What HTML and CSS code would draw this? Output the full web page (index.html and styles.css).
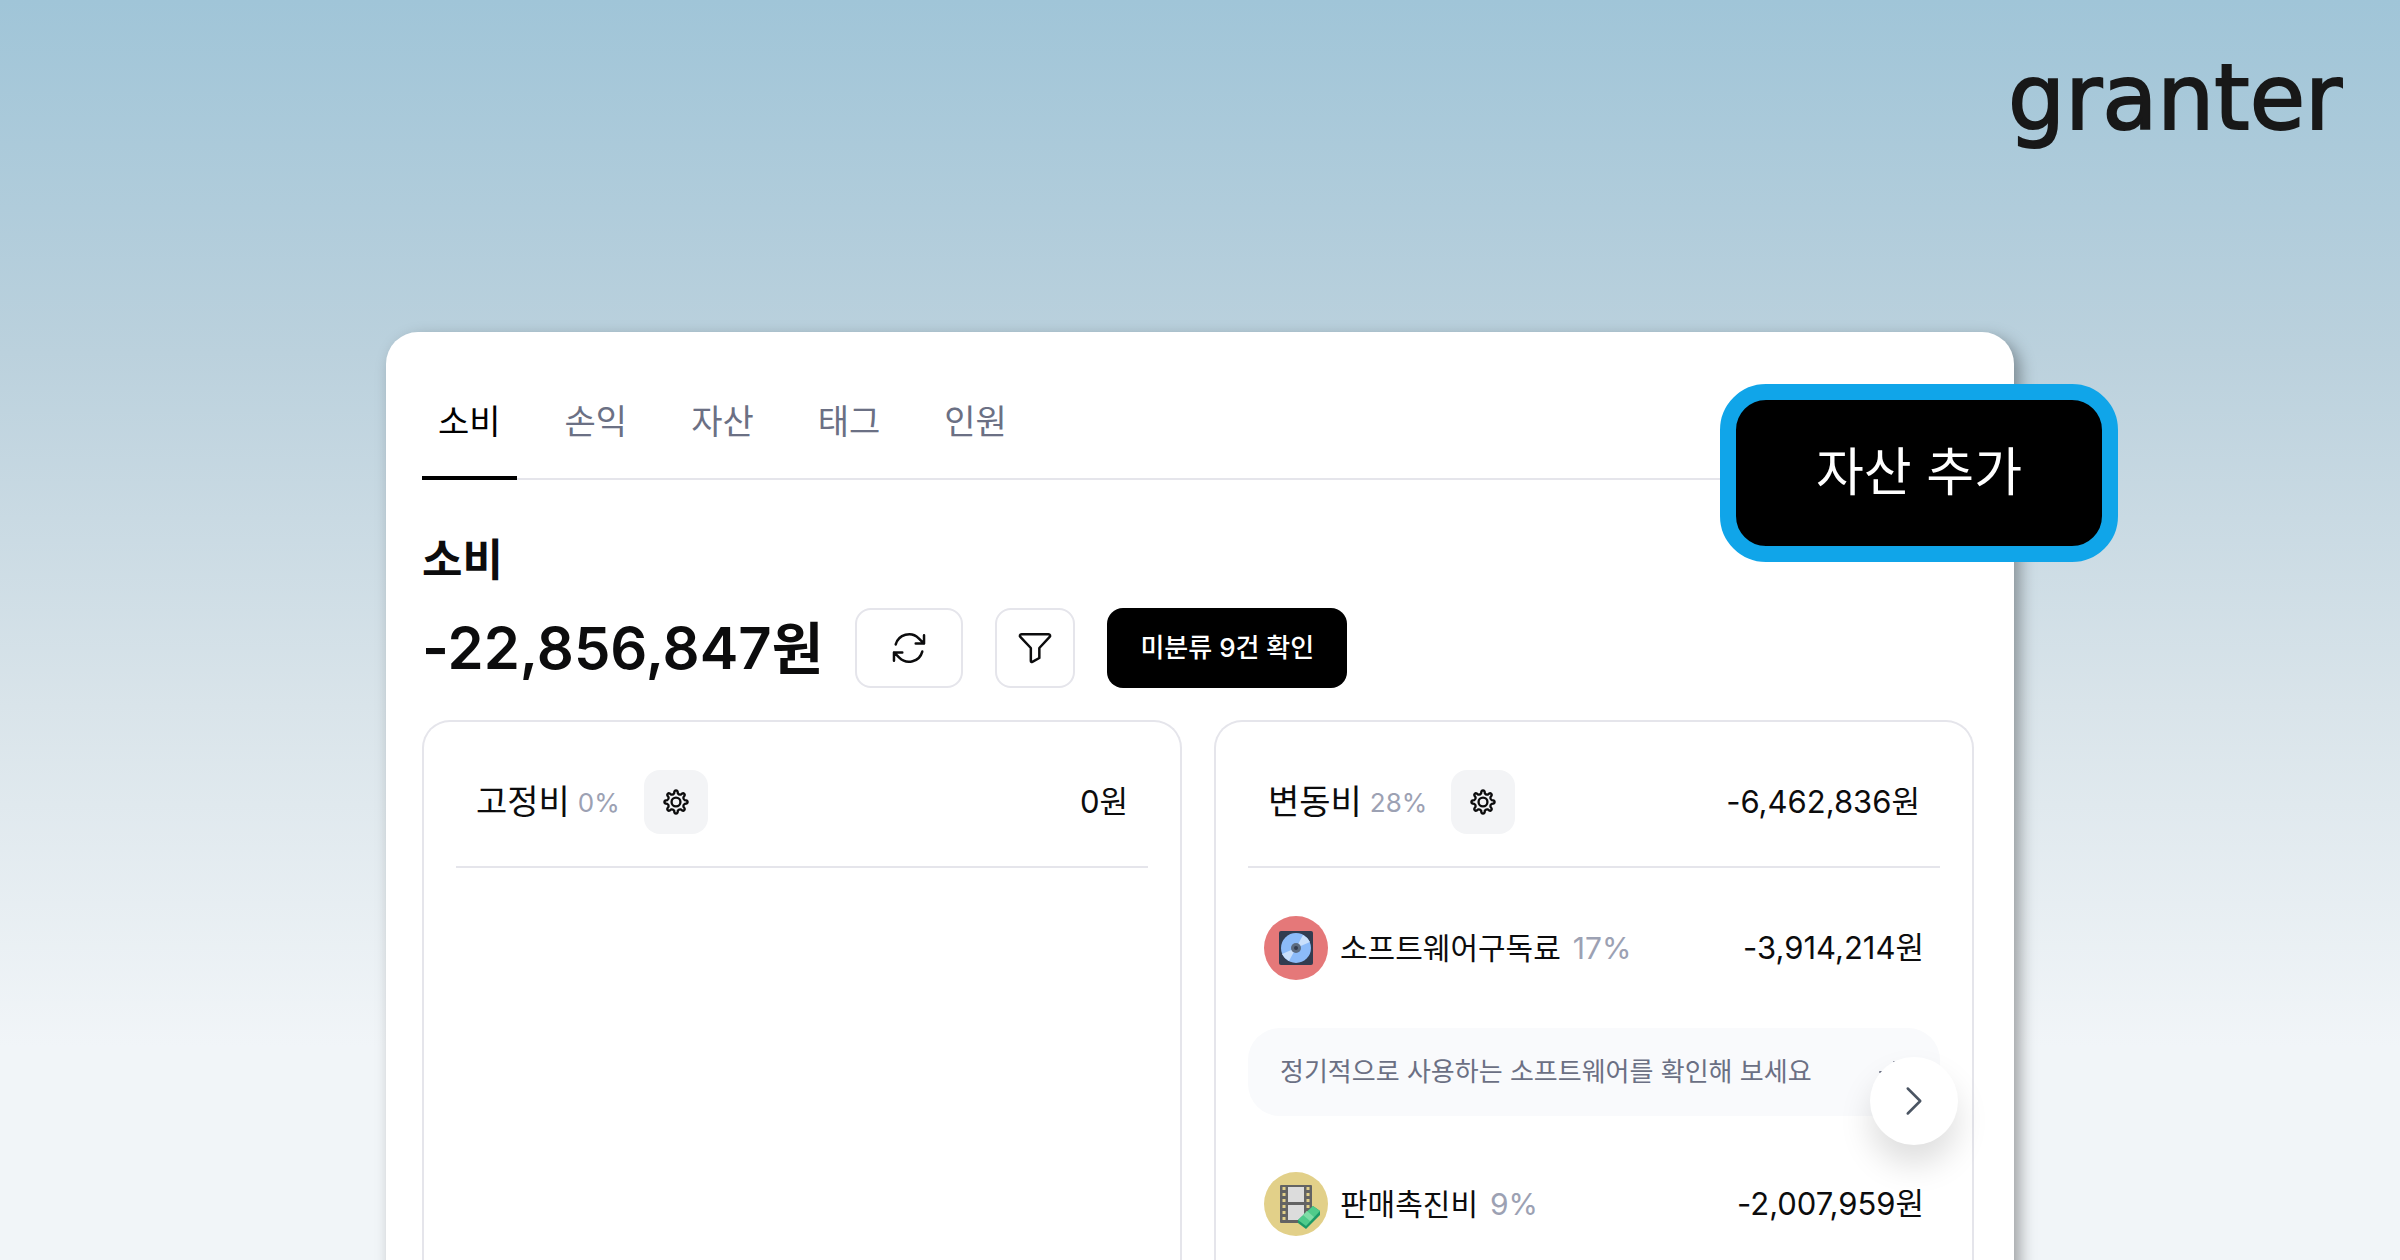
FILE: index.html
```
<!DOCTYPE html>
<html lang="ko">

<head>
    <meta charset="UTF-8">
    <meta name="viewport" content="width=device-width, initial-scale=1.0">
    <title>granter</title>
    <link rel="stylesheet" href="styles.css">
</head>

<body>
    <header class="top">
        <div class="logo">granter</div>
    </header>

    <main class="panel">
        <button type="button" class="add">자산 추가</button>

        <nav class="tabs">
            <a href="#" class="tab active">소비</a>
            <a href="#" class="tab">손익</a>
            <a href="#" class="tab">자산</a>
            <a href="#" class="tab">태그</a>
            <a href="#" class="tab">인원</a>
        </nav>

        <h1 class="title">소비</h1>

        <div class="summary">
            <div class="total">-22,856,847<span class="won">원</span></div>
            <button type="button" class="btn btn-wide" aria-label="새로고침">
                <svg class="icon" viewBox="0 0 24 24">
                    <path d="M16.023 9.348h4.992V4.356M2.985 19.644v-4.992h4.992M2.985 14.652l3.181 3.183a8.25 8.25 0 0 0 13.803-3.7M4.031 9.865a8.25 8.25 0 0 1 13.803-3.7l3.181 3.182" />
                </svg>
            </button>
            <button type="button" class="btn" aria-label="필터">
                <svg class="icon" viewBox="0 0 24 24">
                    <path d="M3.900 3.750h16.200c.9 0 1.300 1 .7 1.600L14.600 12v6l-4.200 2.300c-.5.2-.9 0-.9-.5V12L3.200 5.350c-.6-.6-.2-1.600.7-1.600z" />
                </svg>
            </button>
            <button type="button" class="btn btn-dark">미분류 9건 확인</button>
        </div>

        <div class="cards">
            <section class="card">
                <div class="card-head">
                    <h2 class="card-name">고정비</h2>
                    <span class="percent">0%</span>
                    <button type="button" class="gear" aria-label="고정비 설정">
                        <svg class="icon-sm" viewBox="0 0 24 24">
                            <use href="#gear" />
                        </svg>
                    </button>
                    <span class="amount">0<span class="won">원</span></span>
                </div>
            </section>

            <section class="card">
                <div class="card-head">
                    <h2 class="card-name">변동비</h2>
                    <span class="percent">28%</span>
                    <button type="button" class="gear" aria-label="변동비 설정">
                        <svg class="icon-sm" viewBox="0 0 24 24">
                            <g id="gear" transform="translate(12 12)">
                                <path d="M-1.6-7.4C-1.5-10.8 1.5-10.8 1.6-7.4Q2.5-6 4.1-6.36C6.58-8.7 8.7-6.58 6.36-4.1Q6-2.5 7.4-1.6C10.8-1.5 10.8 1.5 7.4 1.6Q6 2.5 6.36 4.1C8.7 6.58 6.58 8.7 4.1 6.36Q2.5 6 1.6 7.4C1.5 10.8-1.5 10.8-1.6 7.4Q-2.5 6-4.1 6.36C-6.58 8.7-8.7 6.58-6.36 4.1Q-6 2.5-7.4 1.6C-10.8 1.5-10.8-1.5-7.4-1.6Q-6-2.5-6.36-4.1C-8.7-6.58-6.58-8.7-4.1-6.36Q-2.5-6-1.6-7.4z" />
                                <circle r="3.800" />
                            </g>
                        </svg>
                    </button>
                    <span class="amount">-6,462,836<span class="won">원</span></span>
                </div>

                <div class="row">
                    <svg class="badge" viewBox="0 0 64 64">
                        <circle cx="32" cy="32" r="32" fill="#e57879" />
                        <rect x="15" y="15" width="34" height="34" rx="2" fill="#323c50" />
                        <circle cx="32" cy="32" r="15" fill="#8cbbf9" />
                        <path d="M32 32L39 19A15 15 0 0 1 46 26ZM32 32L25 45A15 15 0 0 1 18 38Z" fill="#c9dffb" />
                        <circle cx="32" cy="32" r="5" fill="#5c6b80" />
                        <circle cx="32" cy="32" r="2" fill="#323c50" />
                    </svg>
                    <span class="name">소프트웨어구독료</span>
                    <span class="percent percent-lg">17%</span>
                    <span class="amount">-3,914,214<span class="won">원</span></span>
                </div>

                <a href="#" class="notice">
                    정기적으로 사용하는 소프트웨어를 확인해 보세요
                    <svg class="arrow" viewBox="0 0 24 24">
                        <path d="M13.500 4.500L21 12l-7.500 7.500M21 12H3" />
                    </svg>
                </a>

                <div class="row">
                    <svg class="badge" viewBox="0 0 64 64">
                        <circle cx="32" cy="32" r="32" fill="#e2d089" />
                        <rect x="16" y="13" width="32" height="38" rx="1" fill="#636363" />
                        <path d="M24 15h16v15H24zM24 33h16v15H24z" fill="#dcdcdc" />
                        <path d="M20 15v34M44 15v34" stroke="#e2d089" stroke-width="3" stroke-dasharray="3 3" fill="none" />
                        <path d="M34 48L49 34L56 39V43L42 57L34 51Z" fill="#1c9a67" />
                        <path d="M34 48L49 34L56 39L42 54Z" fill="#50cb8b" />
                        <path d="M39 43L43 39L50 45L46 49Z" fill="#7fdca6" />
                    </svg>
                    <span class="name">판매촉진비</span>
                    <span class="percent percent-lg">9%</span>
                    <span class="amount">-2,007,959<span class="won">원</span></span>
                </div>

                <button type="button" class="next" aria-label="다음">
                    <svg class="icon" viewBox="0 0 24 24">
                        <path d="M8.250 4.500l7.500 7.500-7.500 7.500" />
                    </svg>
                </button>
            </section>
        </div>
    </main>
</body>

</html>
```
FILE: styles.css
```
* {
    box-sizing: border-box;
}

body {
    margin: 0;
    height: 100vh;
    overflow: hidden;
    display: flex;
    flex-direction: column;
    background: linear-gradient(#a0c5d8 0%, #bbd1dd 28%, #d9e4ea 56%, #f1f5f8 83%);
    font-family: Inter, "Noto Sans CJK KR", sans-serif;
    color: #0c0c0d;
}

button {
    border: 0;
    padding: 0;
    font: inherit;
    cursor: pointer;
}

a {
    color: inherit;
    text-decoration: none;
}

.top {
    display: flex;
    justify-content: flex-end;
    padding: 34px 58px 0;
    height: 332px;
    flex: none;
}

.logo {
    font-family: "DejaVu Sans", sans-serif;
    font-size: 90px;
    line-height: 128px;
    color: #181818;
    -webkit-text-stroke: 2px #181818;
}

.panel {
    position: relative;
    flex: 1;
    display: flex;
    flex-direction: column;
    margin: 0 386px;
    padding: 48px 40px 0 36px;
    border-radius: 32px 32px 0 0;
    background: #fff;
    box-shadow: 6px 6px 16px rgba(0, 0, 0, 0.35);
}

.add {
    position: absolute;
    top: 52px;
    right: -104px;
    width: 398px;
    height: 178px;
    border: 16px solid #10a5e9;
    border-radius: 46px;
    background: #000;
    color: #fff;
    font-size: 52px;
    line-height: 64px;
}

.tabs {
    display: flex;
    gap: 32px;
    border-bottom: 2px solid #e5e5eb;
}

.tab {
    padding: 18px 16px 0;
    height: 100px;
    margin-bottom: -2px;
    font-size: 34px;
    line-height: 48px;
    color: #6b7084;
}

.active {
    border-bottom: 4px solid #000;
    color: #000;
}

.title {
    margin: 48px 0 16px;
    font-size: 44px;
    line-height: 64px;
    font-weight: 700;
}

.summary {
    display: flex;
    align-items: center;
    gap: 32px;
    height: 80px;
    margin-bottom: 32px;
}

.total {
    font-size: 58px;
    line-height: 80px;
    font-weight: 600;
}

.won {
    line-height: 1;
}

.total .won {
    font-size: 56px;
}

.btn {
    display: flex;
    align-items: center;
    justify-content: center;
    width: 80px;
    height: 80px;
    border: 2px solid #e5e5eb;
    border-radius: 16px;
    background: #fff;
}

.btn-wide {
    width: 108px;
}

.btn-dark {
    width: 240px;
    border: 0;
    background: #000;
    color: #fff;
    font-size: 26px;
    line-height: 32px;
    font-weight: 500;
}

.icon {
    width: 40px;
    height: 40px;
    fill: none;
    stroke: #0c0c0d;
    stroke-width: 1.5;
    stroke-linecap: round;
    stroke-linejoin: round;
}

.icon-sm {
    width: 28px;
    height: 28px;
    fill: none;
    stroke: #0c0c0d;
    stroke-width: 2;
    stroke-linejoin: round;
}

.cards {
    flex: 1;
    display: flex;
    gap: 32px;
}

.card {
    position: relative;
    flex: 1;
    padding: 0 32px;
    border: 2px solid #e5e5eb;
    border-bottom: 0;
    border-radius: 28px 28px 0 0;
}

.card-head {
    display: flex;
    align-items: center;
    padding: 48px 20px 32px;
    border-bottom: 2px solid #e5e5eb;
}

.card-name {
    margin: 0 8px 0 0;
    font-size: 34px;
    line-height: 48px;
    font-weight: 400;
}

.percent {
    font-size: 26px;
    color: #9ca1b3;
}

.percent-lg {
    font-size: 30px;
}

.gear {
    display: flex;
    align-items: center;
    justify-content: center;
    width: 64px;
    height: 64px;
    margin-left: 24px;
    border-radius: 16px;
    background: #f3f4f6;
}

.amount {
    margin-left: auto;
    font-size: 31px;
    line-height: 48px;
}

.row {
    display: flex;
    align-items: center;
    gap: 12px;
    padding: 0 16px;
    margin: 48px 0;
}

.badge {
    width: 64px;
    height: 64px;
}

.name {
    font-size: 30px;
    line-height: 40px;
}

.notice {
    display: flex;
    align-items: center;
    justify-content: space-between;
    padding: 20px 32px;
    margin-bottom: 56px;
    border-radius: 32px;
    background: #f9fafc;
    color: #6b7084;
    font-size: 26px;
    line-height: 48px;
}

.arrow {
    width: 32px;
    height: 32px;
    fill: none;
    stroke: #6b7084;
    stroke-width: 1.5;
    stroke-linecap: round;
    stroke-linejoin: round;
}

.next {
    position: absolute;
    top: 335px;
    right: 14px;
    display: flex;
    align-items: center;
    justify-content: center;
    width: 88px;
    height: 88px;
    border-radius: 50%;
    background: #fff;
    box-shadow: 0 20px 32px rgba(0, 0, 0, 0.13);
}

.next .icon {
    stroke: #4b5563;
}
```
